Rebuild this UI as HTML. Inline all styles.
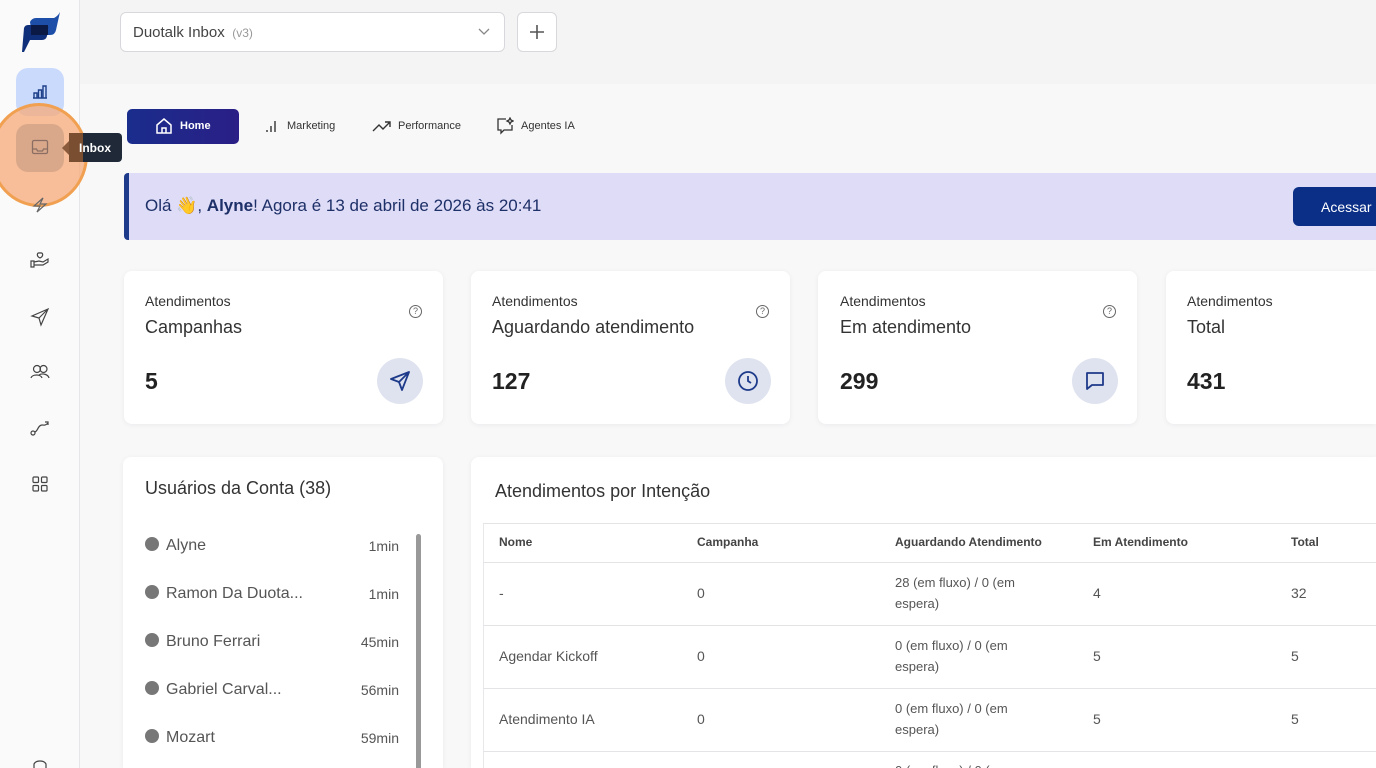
<!DOCTYPE html>
<html style="width:1376px;height:768px;overflow:hidden"><head><meta charset="utf-8"><style>
*{box-sizing:border-box;margin:0;padding:0}
body{width:1376px;height:768px;overflow:hidden;background:#f4f4f5;font-family:"Liberation Sans",Arial,sans-serif;color:#333;position:relative}
.a{position:absolute}
.side{left:0;top:0;width:80px;height:768px;background:#fafafa;border-right:1px solid #e6e6e8}
.ic{position:absolute;left:40px;transform:translateX(-50%)}
.card{position:absolute;background:#fff;border-radius:8px;box-shadow:0 1px 6px rgba(0,0,0,.06)}
.sm{font-size:14px;color:#333}
.tt{font-size:18px;color:#333}
.num{font-size:23px;font-weight:bold;color:#222}
.q{position:absolute;width:13px;height:13px;border:1.2px solid #666;border-radius:50%;font-size:9px;text-align:center;line-height:11px;color:#666}
.circ{position:absolute;width:46px;height:46px;border-radius:50%;background:#dfe3ef}
.th{position:absolute;font-size:12px;font-weight:bold;color:#444}
.td{position:absolute;font-size:14px;color:#555;line-height:21px}
.hl{position:absolute;left:483px;right:0;height:1px;background:#e4e4e6}
.u{position:absolute;left:145px;font-size:16px;color:#555}
.u i{display:inline-block;width:14px;height:14px;border-radius:50%;background:#777;margin-right:7px;vertical-align:-1px}
.ut{position:absolute;right:977px;font-size:14px;color:#555}
</style></head><body>
<div class="a" style="left:80px;top:84px;width:1296px;height:684px;background:#f8f8f9"></div>
<div class="a side"></div>
<!-- logo -->
<svg class="a" style="left:20px;top:12px" width="40" height="40" viewBox="0 0 40 40"><path d="M10 10 Q12 6 16 6 L34 6 Q38 4 40 0 L36 18 Q35 23 30 23 L12 23 Z" fill="#1e4fa8"/><path d="M4 16 Q5 13 8 13 L26 13 Q29 13 28 17 L27 24 Q26 28 22 28 L10 28 L4 40 L2 40 Z" fill="#0f2f7a"/><rect x="11" y="13" width="17" height="10" fill="#0a1a44"/></svg>
<div class="a" style="left:16px;top:68px;width:48px;height:48px;border-radius:12px;background:#c9dafc"></div>
<svg class="a" style="left:31px;top:82px" width="18" height="18" viewBox="0 0 18 18" fill="none" stroke="#1e3f8a" stroke-width="1.4"><path d="M2 16h14M3 16v-5h3v5M7.5 16V8h3v8M12 16V4h3v12"/></svg>
<!-- orange highlight -->
<div class="a" style="left:-10px;top:103px;width:98px;height:104px;border-radius:50%;background:rgba(245,170,120,.75);border:3px solid #f0a050"></div>
<div class="a" style="left:16px;top:124px;width:48px;height:48px;border-radius:12px;background:#d9a88a"></div>
<svg class="a" style="left:31px;top:139px" width="18" height="16" viewBox="0 0 18 16" fill="none" stroke="#8a6e64" stroke-width="1.3"><rect x="1.5" y="1.5" width="15" height="13" rx="1.5"/><path d="M1.5 10h4l1 2h5l1-2h4.5"/></svg>
<div class="a" style="left:69px;top:133px;width:53px;height:29px;border-radius:4px;background:#1f2937"></div>
<div class="a" style="left:62px;top:141px;width:0;height:0;border:7px solid transparent;border-right-color:#8a5a3c;border-left:0"></div>
<div class="a" style="left:69px;top:133px;width:14px;height:29px;background:#7a4e30"></div>
<div class="a" style="left:79px;top:141px;font-size:12px;font-weight:bold;color:#fff">Inbox</div>
<svg class="ic" style="top:196px" width="18" height="18" viewBox="0 0 18 18" fill="none" stroke="#666" stroke-width="1.2"><path d="M12 2L3 10h6l-3 6 9-8H9z"/></svg>
<svg class="ic" style="top:250px" width="20" height="18" viewBox="0 0 20 18" fill="none" stroke="#444" stroke-width="1.2"><path d="M1 11h3v6H1zM4 12l5-1 4 1 5-3v3l-5 3H4"/><path d="M10 8c-4-2-3-6 0-5 3-1 4 3 0 5z"/></svg>
<svg class="ic" style="top:307px" width="20" height="20" viewBox="0 0 20 20" fill="none" stroke="#444" stroke-width="1.2"><path d="M18 2L2 9l7 2 2 7z M9 11l9-9"/></svg>
<svg class="ic" style="top:363px" width="20" height="18" viewBox="0 0 20 18" fill="none" stroke="#444" stroke-width="1.2"><circle cx="7" cy="6" r="3.5"/><circle cx="13.5" cy="6" r="3.5"/><path d="M1 15c1-4 10-4 11 0M9 12c3-2 9-1 10 3"/></svg>
<svg class="ic" style="top:419px" width="20" height="18" viewBox="0 0 20 18" fill="none" stroke="#444" stroke-width="1.2"><circle cx="3" cy="14" r="2"/><path d="M5 13c3-1 3-7 7-7 2 0 3 1 6-2M15 3h3v3"/></svg>
<svg class="ic" style="top:476px" width="16" height="16" viewBox="0 0 16 16" fill="none" stroke="#444" stroke-width="1.2"><rect x="1" y="1" width="5.5" height="5.5" rx="1"/><rect x="9.5" y="1" width="5.5" height="5.5" rx="1"/><rect x="1" y="9.5" width="5.5" height="5.5" rx="1"/><rect x="9.5" y="9.5" width="5.5" height="5.5" rx="1"/></svg>
<svg class="ic" style="top:760px" width="16" height="8" viewBox="0 0 16 8" fill="none" stroke="#444" stroke-width="1.2"><path d="M2 8V4c2-4 10-4 12 0v4"/></svg>
<!-- top select -->
<div class="a" style="left:120px;top:12px;width:385px;height:40px;border:1px solid #d8d8dc;border-radius:6px;background:#fff"></div>
<div class="a" style="left:133px;top:24px;font-size:15px;color:#444">Duotalk Inbox <span style="font-size:12px;color:#999">&nbsp;(v3)</span></div>
<svg class="a" style="left:478px;top:28px" width="12" height="8" viewBox="0 0 12 8" fill="none" stroke="#888" stroke-width="1.3"><path d="M1 1l5 5 5-5"/></svg>
<div class="a" style="left:517px;top:12px;width:40px;height:40px;border:1px solid #d8d8dc;border-radius:6px;background:#fff"></div>
<svg class="a" style="left:529px;top:24px" width="16" height="16" viewBox="0 0 16 16" stroke="#555" stroke-width="1.6"><path d="M8 1v14M1 8h14"/></svg>
<!-- tabs -->
<div class="a" style="left:127px;top:109px;width:112px;height:35px;border-radius:5px;background:linear-gradient(90deg,#1a2d8c,#2a1f86)"></div>
<svg class="a" style="left:155px;top:117px" width="18" height="18" viewBox="0 0 18 18" fill="none" stroke="#fff" stroke-width="1.5"><path d="M2 8l7-6 7 6v8H2z M7 16v-5h4v5"/></svg>
<div class="a" style="left:180px;top:120px;font-size:11px;font-weight:bold;color:#fff">Home</div>
<svg class="a" style="left:265px;top:119px" width="14" height="14" viewBox="0 0 14 14" stroke="#333" stroke-width="1.4"><path d="M2 13v-2M6 13V7M10 13V2"/></svg>
<div class="a" style="left:287px;top:120px;font-size:11px;color:#333">Marketing</div>
<svg class="a" style="left:372px;top:119px" width="20" height="14" viewBox="0 0 20 14" fill="none" stroke="#333" stroke-width="1.4"><path d="M1 12l6-6 4 4 7-7M13 3h5v5"/></svg>
<div class="a" style="left:398px;top:120px;font-size:11px;color:#333">Performance</div>
<svg class="a" style="left:496px;top:117px" width="18" height="18" viewBox="0 0 18 18" fill="none" stroke="#333" stroke-width="1.3"><path d="M10 2H2v11h3v3l3-3h8V8"/><path d="M14 1l1 2 2 1-2 1-1 2-1-2-2-1 2-1z"/></svg>
<div class="a" style="left:521px;top:120px;font-size:11px;color:#333">Agentes IA</div>
<!-- banner -->
<div class="a" style="left:124px;top:173px;width:1252px;height:67px;background:#dedcf6;border-left:5px solid #1e3a8a;border-radius:4px 0 0 4px"></div>
<div class="a" style="left:145px;top:196px;font-size:17px;color:#1e3068">Olá 👋, <b>Alyne</b>! Agora é 13 de abril de 2026 às 20:41</div>
<div class="a" style="left:1293px;top:187px;width:100px;height:39px;background:#0b2f87;border-radius:6px;color:#fff;font-size:14px;padding:12px 0 0 28px">Acessar</div>
<!-- stat cards -->
<div class="card" style="left:124px;top:271px;width:319px;height:153px"></div>
<div class="card" style="left:471px;top:271px;width:319px;height:153px"></div>
<div class="card" style="left:818px;top:271px;width:319px;height:153px"></div>
<div class="card" style="left:1166px;top:271px;width:210px;height:153px;border-radius:8px 0 0 8px"></div>
<div class="a sm" style="left:145px;top:293px">Atendimentos</div><div class="a tt" style="left:145px;top:317px">Campanhas</div><div class="a num" style="left:145px;top:368px">5</div>
<div class="a sm" style="left:492px;top:293px">Atendimentos</div><div class="a tt" style="left:492px;top:317px">Aguardando atendimento</div><div class="a num" style="left:492px;top:368px">127</div>
<div class="a sm" style="left:840px;top:293px">Atendimentos</div><div class="a tt" style="left:840px;top:317px">Em atendimento</div><div class="a num" style="left:840px;top:368px">299</div>
<div class="a sm" style="left:1187px;top:293px">Atendimentos</div><div class="a tt" style="left:1187px;top:317px">Total</div><div class="a num" style="left:1187px;top:368px">431</div>
<div class="q" style="left:409px;top:305px">?</div><div class="q" style="left:756px;top:305px">?</div><div class="q" style="left:1103px;top:305px">?</div>
<div class="circ" style="left:377px;top:358px"></div><div class="circ" style="left:725px;top:358px"></div><div class="circ" style="left:1072px;top:358px"></div>
<svg class="a" style="left:389px;top:370px" width="22" height="22" viewBox="0 0 22 22" fill="none" stroke="#1e3a8a" stroke-width="1.8" stroke-linejoin="round"><path d="M20 2L2 9l8 3 3 8z M10 12l10-10"/></svg>
<svg class="a" style="left:737px;top:370px" width="22" height="22" viewBox="0 0 22 22" fill="none" stroke="#1e3a8a" stroke-width="1.8"><circle cx="11" cy="11" r="9"/><path d="M11 6v5l3 2"/></svg>
<svg class="a" style="left:1084px;top:370px" width="22" height="22" viewBox="0 0 22 22" fill="none" stroke="#1e3a8a" stroke-width="1.8" stroke-linejoin="round"><path d="M3 3h16v12H8l-5 4z"/></svg>
<!-- users -->
<div class="card" style="left:123px;top:457px;width:320px;height:311px;border-radius:8px 8px 0 0"></div>
<div class="a" style="left:145px;top:478px;font-size:18px;color:#333">Usuários da Conta (38)</div>
<div class="a" style="left:416px;top:534px;width:5px;height:234px;border-radius:3px 3px 0 0;background:#999"></div>
<div class="u" style="top:537px"><i></i>Alyne</div><div class="ut" style="top:538px">1min</div>
<div class="u" style="top:585px"><i></i>Ramon Da Duota...</div><div class="ut" style="top:586px">1min</div>
<div class="u" style="top:633px"><i></i>Bruno Ferrari</div><div class="ut" style="top:634px">45min</div>
<div class="u" style="top:681px"><i></i>Gabriel Carval...</div><div class="ut" style="top:682px">56min</div>
<div class="u" style="top:729px"><i></i>Mozart</div><div class="ut" style="top:730px">59min</div>
<!-- table -->
<div class="card" style="left:471px;top:457px;width:905px;height:311px;border-radius:8px 0 0 0"></div>
<div class="a" style="left:495px;top:481px;font-size:18px;color:#333">Atendimentos por Intenção</div>
<div class="a" style="left:483px;top:523px;width:1px;height:245px;background:#e8e8ea"></div>
<div class="hl" style="top:523px"></div><div class="hl" style="top:562px"></div><div class="hl" style="top:625px"></div><div class="hl" style="top:688px"></div><div class="hl" style="top:751px"></div>
<div class="th" style="left:499px;top:535px">Nome</div><div class="th" style="left:697px;top:535px">Campanha</div><div class="th" style="left:895px;top:535px">Aguardando Atendimento</div><div class="th" style="left:1093px;top:535px">Em Atendimento</div><div class="th" style="left:1291px;top:535px">Total</div>
<div class="td" style="left:499px;top:583px">-</div><div class="td" style="left:697px;top:583px">0</div><div class="td" style="left:895px;top:572px;font-size:13px">28 (em fluxo) / 0 (em<br>espera)</div><div class="td" style="left:1093px;top:583px">4</div><div class="td" style="left:1291px;top:583px">32</div>
<div class="td" style="left:499px;top:646px">Agendar Kickoff</div><div class="td" style="left:697px;top:646px">0</div><div class="td" style="left:895px;top:635px;font-size:13px">0 (em fluxo) / 0 (em<br>espera)</div><div class="td" style="left:1093px;top:646px">5</div><div class="td" style="left:1291px;top:646px">5</div>
<div class="td" style="left:499px;top:709px">Atendimento IA</div><div class="td" style="left:697px;top:709px">0</div><div class="td" style="left:895px;top:698px;font-size:13px">0 (em fluxo) / 0 (em<br>espera)</div><div class="td" style="left:1093px;top:709px">5</div><div class="td" style="left:1291px;top:709px">5</div>
<div class="td" style="left:895px;top:760px;font-size:13px">0 (em fluxo) / 0 (em</div>
</body></html>
